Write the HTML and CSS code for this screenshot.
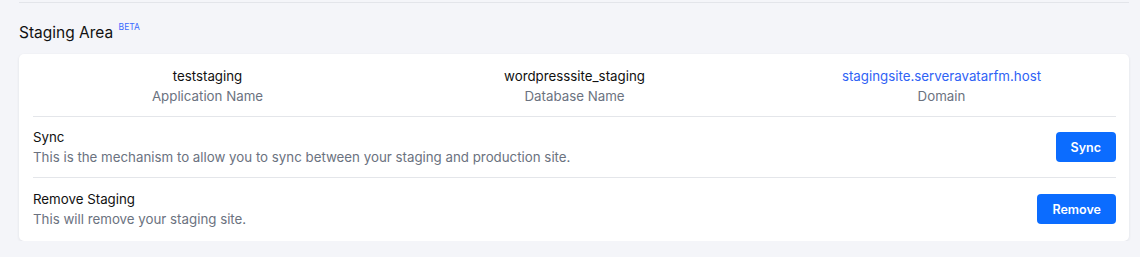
FILE: index.html
```html
<!DOCTYPE html>
<html>
<head>
<meta charset="utf-8">
<link rel="stylesheet" href="styles.css">
</head>
<body>
<div class="page">
  <div class="rule"></div>
  <h2 class="title">Staging Area <sup class="beta">BETA</sup></h2>
  <div class="card">
    <div class="info">
      <div class="info-item">
        <div class="value">teststaging</div>
        <div class="label">Application Name</div>
      </div>
      <div class="info-item">
        <div class="value">wordpresssite_staging</div>
        <div class="label">Database Name</div>
      </div>
      <div class="info-item">
        <a class="value link" href="#">stagingsite.serveravatarfm.host</a>
        <div class="label">Domain</div>
      </div>
    </div>
    <div class="action">
      <div class="action-text">
        <div class="action-title">Sync</div>
        <div class="action-desc">This is the mechanism to allow you to sync between your staging and production site.</div>
      </div>
      <button class="btn">Sync</button>
    </div>
    <div class="action last">
      <div class="action-text">
        <div class="action-title">Remove Staging</div>
        <div class="action-desc">This will remove your staging site.</div>
      </div>
      <button class="btn">Remove</button>
    </div>
  </div>
</div>
</body>
</html>
```
FILE: styles.css
```css
* { box-sizing: border-box; }
html, body { margin: 0; padding: 0; }
body {
  background: #f4f5f9;
  font-family: "Inter", "Noto Sans", sans-serif;
  color: #111;
  font-size: 13.3px;
}
.page {
  padding: 2px 11px 0 19px;
}
.rule {
  border-top: 1px solid #e3e5ea;
}
.title {
  margin: 0;
  padding-top: 20px;
  font-size: 15.5px;
  font-weight: 400;
  line-height: 20px;
  color: #111;
}
.beta {
  font-size: 8.5px;
  color: #3b6cff;
  vertical-align: top;
  position: relative;
  top: -6px;
  margin-left: 1px;
}
.card {
  margin-top: 11px;
  background: #fff;
  border-radius: 5px;
  box-shadow: 0 1px 3px rgba(20, 30, 60, 0.09);
  padding: 0 13px 0 14px;
}
.info {
  display: grid;
  grid-template-columns: 1fr 1fr 1fr;
  column-gap: 18px;
  padding: 12px 0 10px;
  border-bottom: 1px solid #e4e6ea;
  text-align: center;
}
.info-item {
  display: flex;
  flex-direction: column;
  align-items: center;
  line-height: 20px;
}
.value {
  color: #111;
}
.link {
  color: #2f62f5;
  text-decoration: none;
}
.label {
  color: #6b7280;
}
.action {
  display: flex;
  align-items: center;
  justify-content: space-between;
  padding: 10px 0 10px;
  border-bottom: 1px solid #e4e6ea;
  line-height: 20px;
}
.action.last {
  border-bottom: none;
  padding: 11px 0 12px;
}
.action-title {
  color: #111;
}
.action-desc {
  color: #6b7280;
}
.btn {
  height: 30px;
  padding: 0 15px;
  border: none;
  border-radius: 4px;
  background: #0b6cff;
  color: #fff;
  font-family: inherit;
  font-size: 12.5px;
  font-weight: 600;
}
```
